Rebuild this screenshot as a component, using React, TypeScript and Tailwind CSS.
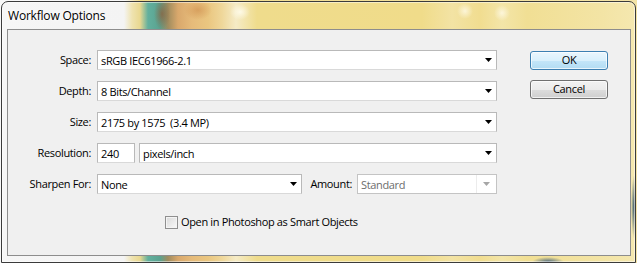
import React from "react";

const f = "font-['Open_Sans',sans-serif] text-[11px] tracking-[-0.35px]";

function Arrow({ color = "#000" }: { color?: string }) {
  return (
    <svg width="7" height="4" viewBox="0 0 7 4" className="block">
      <polygon points="0,0 7,0 3.5,4" fill={color} />
    </svg>
  );
}

function Select({ className, text }: { className: string; text: string }) {
  return (
    <div
      className={`h-[20px] bg-white border border-[#b9b9b9] border-b-[#d9d9d9] flex items-center pl-[3px] pr-[4px] ${className}`}
    >
      <span className={`flex-1 leading-none whitespace-pre text-black ${f}`}>{text}</span>
      <Arrow />
    </div>
  );
}

function Row({ label, children }: { label: string; children: React.ReactNode }) {
  return (
    <div className="flex items-center h-[20px]">
      <div className={`w-[83px] text-right text-black ${f}`}>{label}</div>
      <div className="ml-[6px] flex items-center w-[400px]">{children}</div>
    </div>
  );
}

export default function App() {
  return (
    <div className="w-[637px] h-[263px] pl-[1px] pt-[1px] overflow-hidden [background-image:linear-gradient(to_right,#f8f8f8_0px,#f8f8f8_125px,#f0dc8c_140px,#f3e3a6_637px)]">
      <div className="w-[635px] h-[262px] rounded-t-[7px] border border-[#3b3b3b] flex flex-col shadow-[inset_0_0_0_1px_rgba(255,255,255,0.5)] [background-image:radial-gradient(16px_5px_at_546px_100%,#45637c,transparent),radial-gradient(3px_32px_at_632px_205px,#3d5c6c,transparent),radial-gradient(8px_16px_at_160px_12px,rgba(140,95,60,0.75),transparent),radial-gradient(14px_10px_at_196px_8px,rgba(205,140,75,0.6),transparent),radial-gradient(10px_8px_at_238px_10px,rgba(255,252,235,0.9),transparent),radial-gradient(8px_8px_at_463px_9px,rgba(255,250,230,0.8),transparent),radial-gradient(8px_8px_at_500px_11px,rgba(255,250,230,0.8),transparent),linear-gradient(to_right,#f6f6f6_0px,#f4f4f4_122px,#efe3b0_130px,#e9d890_138px,#62b09e_146px,#5aa28f_158px,#a08c5e_166px,#d9a86c_176px,#e6bb7a_190px,#eac680_206px,#efd79a_220px,#f5ebc6_234px,#efdc8c_255px,#f0dc8a_420px,#f3e3a4_450px,#f1dd90_478px,#f3e5a8_500px,#f1df94_525px,#f3e4a5_600px,#f5e8b0_635px)]">
        <div className="h-[27px] flex items-center pl-[6px]">
          <span className="font-['Open_Sans',sans-serif] text-[12px] tracking-[-0.2px] text-black [text-shadow:0_0_6px_#fff,0_0_3px_#fff]">
            Workflow Options
          </span>
        </div>
        <div className="flex-1 mb-[6px] ml-[5px] mr-[4px] border border-[#8d8d8d] bg-[#f0f0f0] flex">
          <div className="pt-[20px] flex flex-col gap-[11px]">
            <Row label="Space:">
              <Select className="w-[400px]" text="sRGB IEC61966-2.1" />
            </Row>
            <Row label="Depth:">
              <Select className="w-[400px]" text="8 Bits/Channel" />
            </Row>
            <Row label="Size:">
              <Select className="w-[400px]" text="2175 by 1575  (3.4 MP)" />
            </Row>
            <Row label="Resolution:">
              <div className="w-[38px] h-[20px] bg-white border border-[#b9b9b9] border-b-[#d9d9d9] flex items-center pl-[3px]">
                <span className={`leading-none text-black ${f}`}>240</span>
              </div>
              <Select className="ml-[4px] w-[358px]" text="pixels/inch" />
            </Row>
            <Row label="Sharpen For:">
              <Select className="w-[205px]" text="None" />
              <span className={`ml-auto mr-[5px] text-black ${f}`}>Amount:</span>
              <div className="w-[140px] h-[20px] bg-white border border-[#c4c4c4] flex items-stretch">
                <div className="flex-1 flex items-center pl-[3px] border-r border-[#ececec]">
                  <span className={`leading-none text-[#6d6d6d] ${f}`}>Standard</span>
                </div>
                <div className="w-[19px] flex items-center justify-center">
                  <Arrow color="#a6a6a6" />
                </div>
              </div>
            </Row>
            <div className="mt-[11px] h-[13px] flex items-center">
              <div className="ml-[157px] w-[13px] h-[13px] border border-[#8f8f8f] bg-[linear-gradient(135deg,#d9d9d9,#f9f9f9)] shadow-[inset_0_0_0_1px_#f4f4f4]" />
              <span className={`ml-[3px] text-black ${f}`}>Open in Photoshop as Smart Objects</span>
            </div>
          </div>
          <div className="ml-[33px] pt-[21px] flex flex-col gap-[10px]">
            <button className={`w-[78px] h-[19px] rounded-[3px] border border-[#3c7fb1] bg-[linear-gradient(to_bottom,#eaf6fd,#d9f0fc_50%,#c4e6f9_50%,#b2dcf3)] shadow-[inset_0_0_0_1px_rgba(255,255,255,0.7)] flex items-center justify-center text-black ${f}`}>
              OK
            </button>
            <button className={`w-[78px] h-[19px] rounded-[3px] border border-[#707070] bg-[linear-gradient(to_bottom,#f2f2f2,#ebebeb_50%,#dddddd_50%,#cfcfcf)] shadow-[inset_0_0_0_1px_rgba(255,255,255,0.7)] flex items-center justify-center text-black ${f}`}>
              Cancel
            </button>
          </div>
        </div>
      </div>
    </div>
  );
}
